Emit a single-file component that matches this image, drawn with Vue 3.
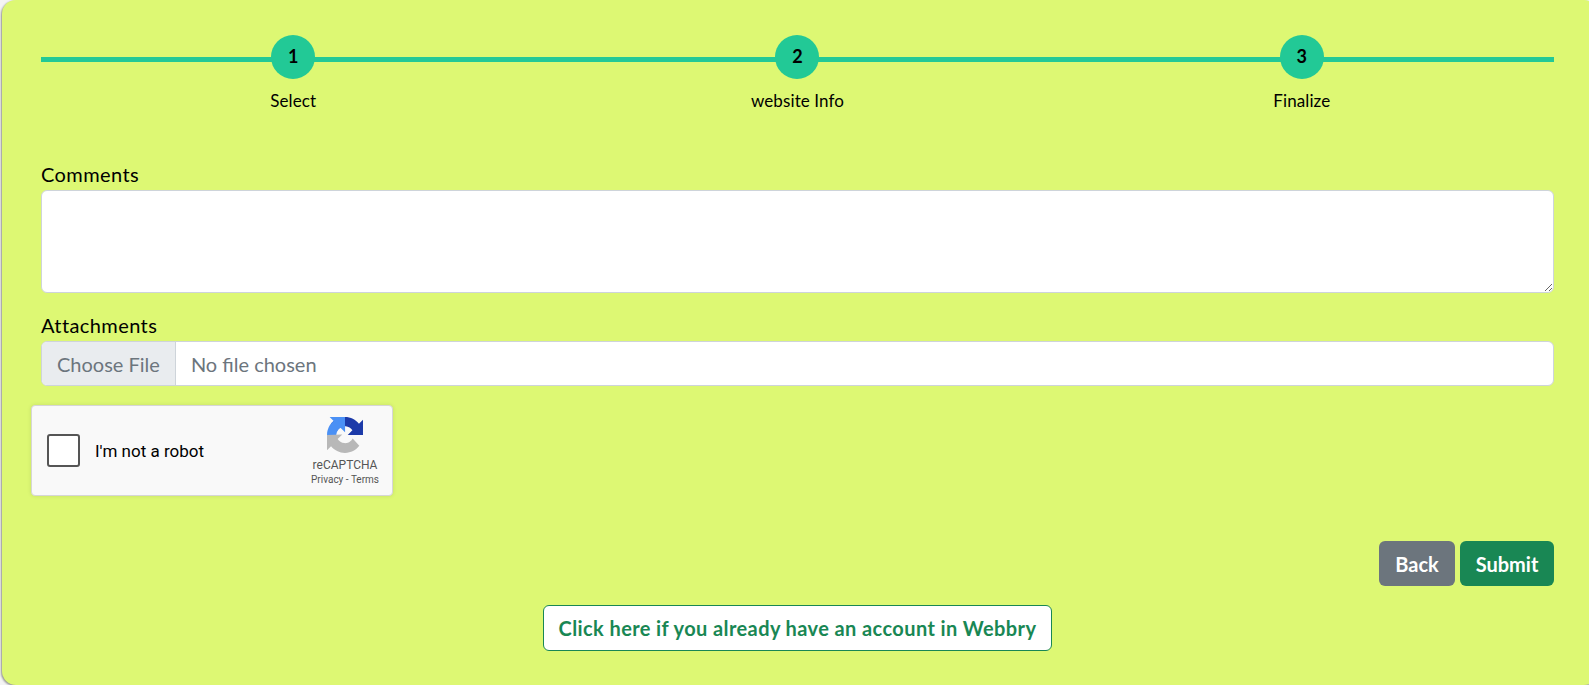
<script setup>
const steps = [
  { n: 1, label: 'Select' },
  { n: 2, label: 'website Info' },
  { n: 3, label: 'Finalize' },
]
</script>

<template>
  <div class="page">
    <main class="card">
      <ol class="stepper">
        <li v-for="s in steps" :key="s.n" class="step">
          <span class="dot">{{ s.n }}</span>
          <span class="step-label">{{ s.label }}</span>
        </li>
      </ol>

      <form class="form" @submit.prevent>
        <label class="label" for="comments">Comments</label>
        <textarea id="comments" class="textarea"></textarea>

        <label class="label attach">Attachments</label>
        <div class="file">
          <span class="file-btn">Choose File</span>
          <span class="file-name">No file chosen</span>
        </div>

        <div class="captcha">
          <span class="check"></span>
          <span class="robot">I'm not a robot</span>
          <div class="brand">
            <svg class="logo" viewBox="0 0 64 64" aria-hidden="true">
              <path d="M64 31.955l-.033-1.37V4.687l-7.16 7.16C50.948 4.674 42.033.093 32.05.093c-10.4 0-19.622 4.96-25.458 12.64l11.736 11.86a15.55 15.55 0 0 1 4.754-5.334c2.05-1.6 4.952-2.906 9-2.906.49 0 .867.057 1.144.164 5.017.396 9.365 3.165 11.9 7.187l-8.306 8.306 26.177-.07" fill="#1c3aa9"/>
              <path d="M31.984 0l-1.37.033H4.687l7.16 7.16C4.674 13.052.093 21.967.093 31.95h16.42c0-.49.057-.867.164-1.144.396-5.017 3.165-9.365 7.187-11.9l8.306 8.306L31.94 0" fill="#4a90f5"/>
              <path d="M0 31.955l.033 1.37v25.9l7.16-7.16c5.86 7.173 14.774 11.754 24.76 11.754 10.4 0 19.622-4.96 25.458-12.64L45.676 38.32a15.55 15.55 0 0 1-4.754 5.334c-2.05 1.6-4.952 2.906-9 2.906-.49 0-.867-.057-1.144-.164-5.017-.396-9.365-3.165-11.9-7.187l8.306-8.306L.007 31.97" fill="#b8b8b8"/>
            </svg>
            <span class="brand-name">reCAPTCHA</span>
            <span class="brand-links">Privacy - Terms</span>
          </div>
        </div>

        <div class="actions">
          <button type="button" class="btn back">Back</button>
          <button type="submit" class="btn submit">Submit</button>
        </div>

        <div class="login">
          <button type="button" class="btn account">Click here if you already have an account in Webbry</button>
        </div>
      </form>
    </main>
  </div>
</template>

<style scoped>
.page {
  height: 685px;
  overflow: hidden;
  background: #f4f4f4;
}
.card {
  box-sizing: border-box;
  height: 685px;
  margin: 0 -9px 0 2px;
  padding: 35px 44px 0 39px;
  background: #ddf873;
  border-radius: 14px;
  box-shadow: -1px 1px 2px rgba(0, 0, 0, 0.4);
  font-family: Lato, "Open Sans", sans-serif;
  color: #000;
}
.stepper {
  display: grid;
  grid-template-columns: repeat(3, 1fr);
  margin: 0;
  padding: 0;
  list-style: none;
  background: linear-gradient(#22c996, #22c996) 0 22px / 100% 5px no-repeat;
}
.step {
  display: flex;
  flex-direction: column;
  align-items: center;
}
.dot {
  display: flex;
  align-items: center;
  justify-content: center;
  width: 44px;
  height: 44px;
  padding-bottom: 3px;
  box-sizing: border-box;
  border-radius: 50%;
  background: #22c996;
  font-size: 18px;
  font-weight: 700;
}
.step-label {
  margin-top: 12px;
  font-size: 17px;
  letter-spacing: 0.1px;
  line-height: 20px;
}
.form {
  display: flex;
  flex-direction: column;
}
.label {
  font-size: 20px;
  letter-spacing: 0.4px;
  line-height: 23px;
}
.label:first-child {
  margin-top: 52px;
  margin-bottom: 4px;
}
.attach {
  margin-top: 21px;
  margin-bottom: 4px;
}
.textarea {
  display: block;
  box-sizing: border-box;
  width: 100%;
  height: 103px;
  margin: 0;
  background: #fff;
  border: 1px solid #ced4da;
  border-radius: 6px;
  resize: vertical;
}
.file {
  display: flex;
  height: 45px;
  box-sizing: border-box;
  background: #fff;
  border: 1px solid #ced4da;
  border-radius: 6px;
  overflow: hidden;
  font-size: 20px;
  color: #6c757d;
}
.file-btn {
  display: flex;
  align-items: center;
  padding: 0 15px;
  background: #e9ecef;
  border-right: 1px solid #ced4da;
}
.file-name {
  display: flex;
  align-items: center;
  padding-left: 15px;
}
.captcha {
  display: flex;
  align-items: center;
  box-sizing: border-box;
  width: 362px;
  height: 91px;
  margin: 19px 0 0 -10px;
  padding: 0 13px 0 15px;
  background: #f9f9f9;
  border: 1px solid #d6d6d6;
  border-radius: 4px;
  box-shadow: 0 0 4px rgba(0, 0, 0, 0.1);
  font-family: Roboto, sans-serif;
}
.check {
  box-sizing: border-box;
  width: 33px;
  height: 33px;
  background: #fff;
  border: 2px solid #555;
  border-radius: 3px;
}
.robot {
  margin-left: 15px;
  font-size: 17px;
  color: #000;
}
.brand {
  display: flex;
  flex-direction: column;
  align-items: center;
  margin-left: auto;
  margin-top: 2px;
  color: #555;
}
.logo {
  width: 36px;
  height: 36px;
  margin-bottom: 5px;
}
.brand-name {
  font-size: 12px;
  line-height: 14px;
}
.brand-links {
  font-size: 10px;
  line-height: 15px;
}
.actions {
  display: flex;
  justify-content: flex-end;
  gap: 5px;
  margin-top: 45px;
}
.btn {
  height: 45px;
  padding: 0 10px;
  border: 1px solid transparent;
  border-radius: 6px;
  font-family: inherit;
  font-size: 20px;
  font-weight: 700;
  color: #fff;
}
.back {
  width: 76px;
  background: #6c757d;
}
.submit {
  width: 94px;
  background: #198754;
}
.login {
  display: flex;
  justify-content: center;
  margin-top: 19px;
}
.account {
  width: 509px;
  height: 46px;
  background: #fff;
  border-color: #198754;
  color: #198754;
  letter-spacing: 0.4px;
}
</style>
